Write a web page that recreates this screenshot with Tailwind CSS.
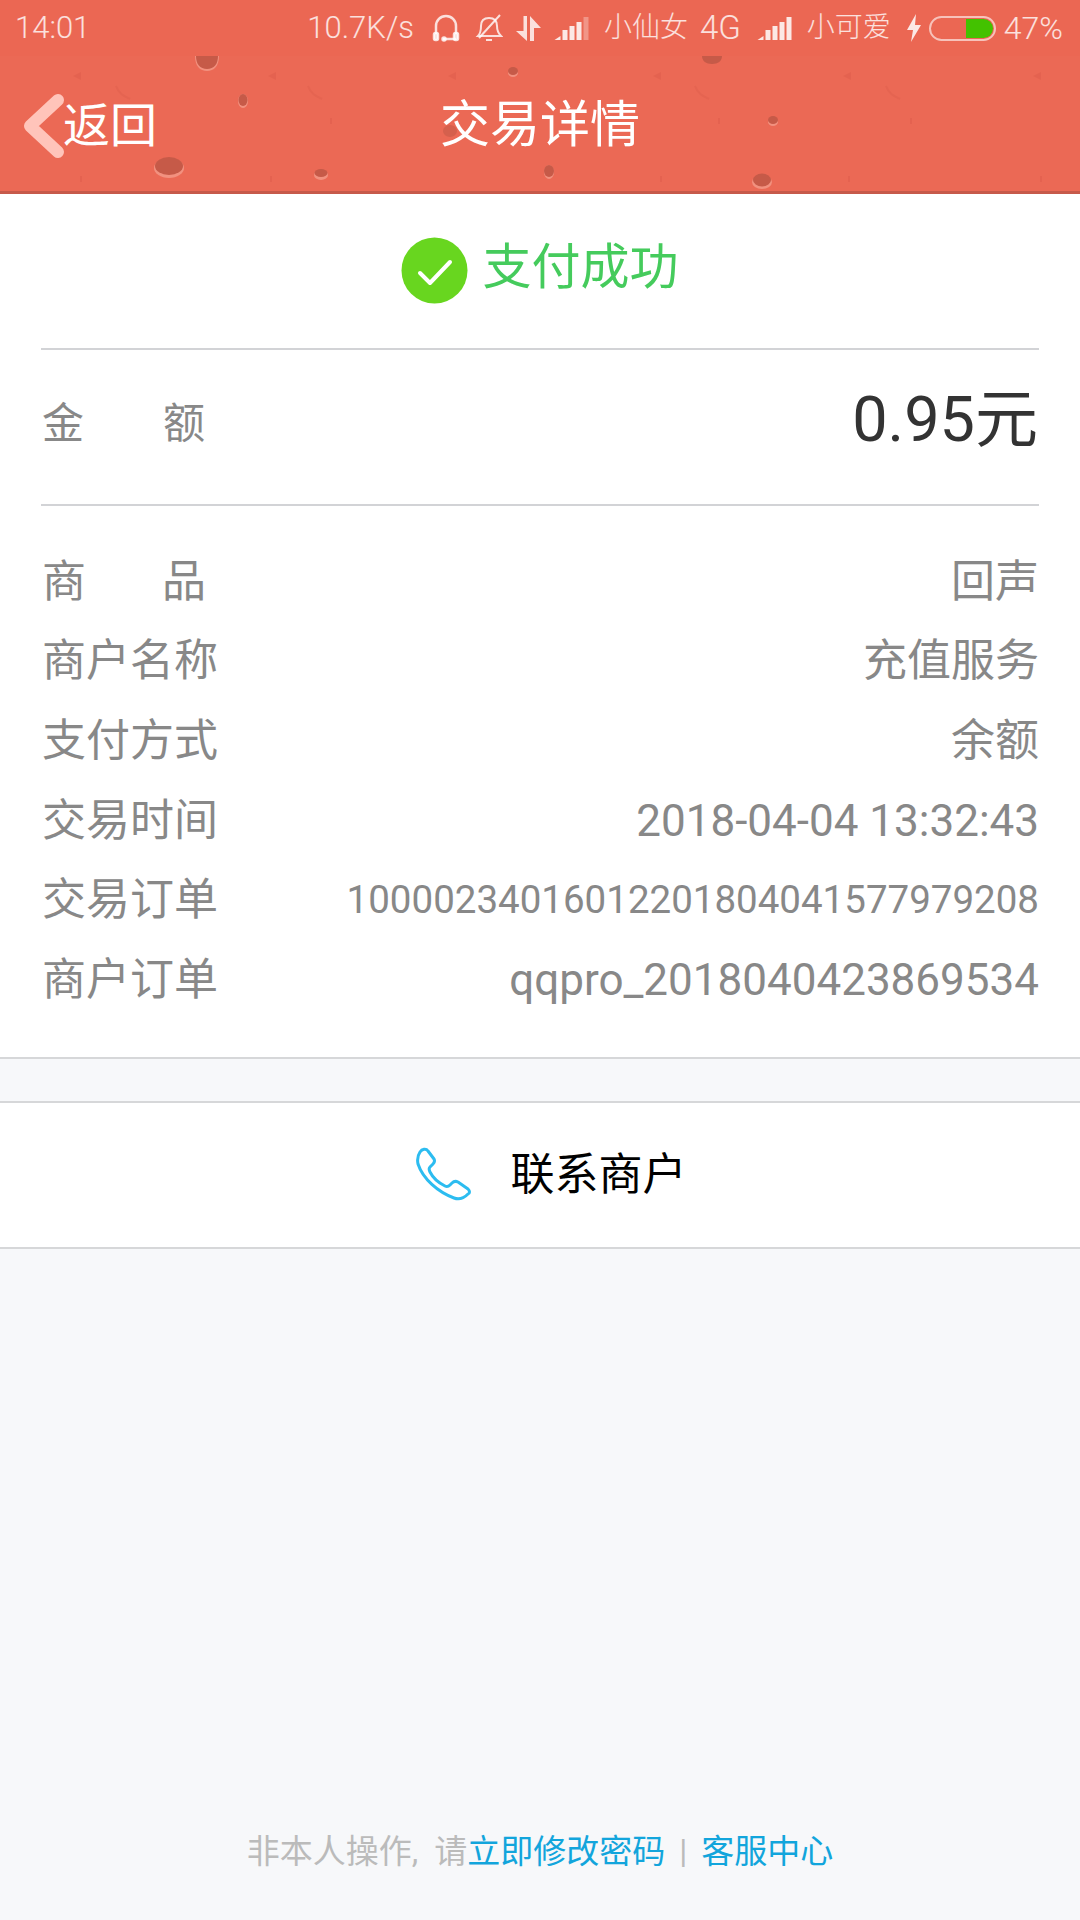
<!DOCTYPE html>
<html lang="zh-CN">
  <head>
    <meta charset="UTF-8" />
    <title>交易详情</title>
    <script src="https://cdn.jsdelivr.net/npm/@tailwindcss/browser@4"></script>
  </head>
  <body class="w-[1080px] h-[1920px] overflow-hidden bg-[#f7f8fa] font-['Roboto','Noto_Sans_CJK_SC',sans-serif] flex flex-col">
    <!-- header: status bar + nav -->
    <header class="relative h-[194px] bg-[#eb6753] shrink-0">
      <!-- nav texture -->
      <svg class="absolute left-0 top-[56px]" width="1080" height="138" viewBox="0 56 1080 138">
        <rect x="0" y="56" width="1080" height="135" fill="#eb6955" />
        <rect x="0" y="191" width="1080" height="3" fill="#c65a4b" />
        <g fill="#f2917f">
          <path d="M195 56h24c0 10-5 15-12 15s-12-5-12-15z" />
          <ellipse cx="243" cy="101" rx="5" ry="7" />
          <ellipse cx="513" cy="73" rx="5" ry="4" />
          <ellipse cx="169" cy="168" rx="15" ry="10" />
          <ellipse cx="321" cy="175" rx="7" ry="5" />
          <ellipse cx="773" cy="122" rx="5" ry="4" />
          <ellipse cx="549" cy="172" rx="5" ry="7" />
          <ellipse cx="762" cy="182" rx="10" ry="7" />
        </g>
        <g fill="#c65a48">
          <path d="M196 56h22c0 8-4 13-11 13s-11-5-11-13z" />
          <path d="M702 56h20c0 5-4 8-10 8s-10-3-10-8z" />
          <ellipse cx="243" cy="100" rx="4.500" ry="6" />
          <ellipse cx="513" cy="71" rx="5" ry="4" />
          <ellipse cx="169" cy="166" rx="14" ry="9" />
          <ellipse cx="321" cy="173" rx="6.500" ry="4" />
          <ellipse cx="773" cy="120" rx="5" ry="4" />
          <ellipse cx="549" cy="171" rx="5" ry="6" />
          <ellipse cx="762" cy="180" rx="9" ry="6.500" />
          <ellipse cx="450" cy="131" rx="7" ry="6" opacity="0.6" />
        </g>
        <g fill="#e05f4d" opacity="0.6">
          <path d="M73 76l8-4v8z" />
          <path d="M268 76l8-4v8z" />
          <path d="M448 76l8-4v8z" />
          <path d="M653 76l8-4v8z" />
          <path d="M843 76l8-4v8z" />
          <path d="M1033 76l8-4v8z" />
          <rect x="80" y="176" width="2" height="6" />
          <rect x="270" y="176" width="2" height="6" />
          <rect x="660" y="176" width="2" height="6" />
          <rect x="848" y="176" width="2" height="6" />
          <rect x="1040" y="176" width="2" height="6" />
          <rect x="330" y="118" width="2" height="6" />
          <rect x="718" y="118" width="2" height="6" />
          <rect x="910" y="118" width="2" height="6" />
        </g>
        <g fill="none" stroke="#e05f4d" stroke-width="2" opacity="0.5">
          <path d="M116 86c3 8 8 10 14 13" />
          <path d="M308 86c3 8 8 10 14 13" />
          <path d="M695 86c3 8 8 10 14 13" />
          <path d="M886 86c3 8 8 10 14 13" />
        </g>
      </svg>

      <!-- status bar -->
      <div class="relative h-[56px] flex items-center justify-between pl-[15px] pr-[17px] text-white/80 text-[31px] font-light">
        <span>14:01</span>
        <div class="flex items-center">
          <span>10.7K/s</span>
          <svg class="ml-[18px]" width="28" height="28" viewBox="0 0 28 28" fill="none" stroke="#fff" stroke-opacity="0.8" stroke-width="2.500">
            <path d="M4 20V12a10 10 0 0 1 20 0v8" />
            <rect x="2" y="19" width="4" height="7" rx="1.500" fill="#fff" fill-opacity="0.8" />
            <rect x="22" y="19" width="4" height="7" rx="1.500" fill="#fff" fill-opacity="0.8" />
            <path d="M24 25h-11" />
            <circle cx="12" cy="25" r="1.500" fill="#fff" />
          </svg>
          <svg class="ml-[15px]" width="28" height="30" viewBox="0 0 28 30" fill="none" stroke="#fff" stroke-opacity="0.8" stroke-width="2">
            <path d="M3 23c3-3 3-6 3-10 0-5 3-8 8-8s8 3 8 8c0 4 1 7 4 10z" />
            <path d="M11 27h6" />
            <path d="M4 25L25 2" />
          </svg>
          <svg class="ml-[13px]" width="25" height="25" viewBox="0 0 25 25" fill="#fff" fill-opacity="0.8">
            <path d="M7.500 0H11v25L0 15h7.500z" />
            <path d="M14 25V0l11 12h-7v13z" />
          </svg>
          <!-- signal 1 -->
          <svg class="ml-[13px]" width="35" height="24" viewBox="0 0 34 24" fill="#fff" fill-opacity="0.85">
            <path d="M0 24l6-4v4z" />
            <rect x="8" y="14" width="5" height="10" />
            <rect x="15" y="10" width="5" height="14" />
            <rect x="22" y="6" width="5" height="18" />
            <rect x="29" y="1" width="5" height="23" fill-opacity="0.3" />
          </svg>
          <span class="ml-[15px] text-[28px]">小仙女</span>
          <span class="ml-[12px] text-[33px]">4G</span>
          <svg class="ml-[16px]" width="35" height="24" viewBox="0 0 34 24" fill="#fff" fill-opacity="0.85">
            <path d="M0 24l6-4v4z" />
            <rect x="8" y="14" width="5" height="10" />
            <rect x="15" y="10" width="5" height="14" />
            <rect x="22" y="6" width="5" height="18" />
            <rect x="29" y="1" width="5" height="23" />
          </svg>
          <span class="ml-[15px] text-[28px]">小可爱</span>
          <svg class="ml-[15px]" width="16" height="28" viewBox="0 0 16 28" fill="#fff" fill-opacity="0.85">
            <path d="M10 0L1 16h6l-2 12 10-17H9z" />
          </svg>
          <div class="ml-[7px] relative w-[67px] h-[25px] rounded-full border-2 border-white/60 overflow-hidden">
            <div class="absolute right-[1px] top-[1px] bottom-[1px] w-[27px] bg-[#43c200] rounded-r-full"></div>
          </div>
          <span class="ml-[8px] text-[32px]">47%</span>
        </div>
      </div>

      <!-- nav -->
      <nav class="relative h-[138px] flex items-center justify-center">
        <div class="absolute left-[22px] top-[35px] flex items-center">
          <svg width="42" height="64" viewBox="0 0 42 64" fill="none">
            <path d="M36 6L8 32l28 26" stroke="#ffc4ba" stroke-width="12" stroke-linecap="round" stroke-linejoin="round" />
          </svg>
          <span class="text-white text-[47px] -ml-[1px]">返回</span>
        </div>
        <h1 class="text-white text-[50px] font-normal">交易详情</h1>
      </nav>
    </header>

    <!-- detail card -->
    <section class="bg-white border-b-2 border-[#d6d7d9] shrink-0">
      <div class="h-[156px] border-b-2 border-[#d2d3d6] mx-[41px] flex items-center justify-center gap-[14px] pb-[2px]">
        <svg width="67" height="67" viewBox="0 0 67 67">
          <circle cx="33.500" cy="33.500" r="33" fill="#68d61f" />
          <path d="M19 36l10 10 20-21" fill="none" stroke="#fff" stroke-width="4" stroke-linecap="round" stroke-linejoin="round" />
        </svg>
        <span class="text-[#45cb5c] text-[49px] leading-none pb-[6px]">支付成功</span>
      </div>
      <div class="h-[156px] border-b-2 border-[#d2d3d6] mx-[41px] flex items-center justify-between pl-[1px] pr-[1px] pb-[8px]">
        <span class="w-[163px] flex justify-between text-[#888888] text-[42px]"><span>金</span><span>额</span></span>
        <span class="text-[#333333] text-[63px] leading-none pb-[8px]">0.95元</span>
      </div>
      <dl class="pl-[42px] pr-[41px] pt-[36px] pb-[37px] text-[44px] text-[#888888]">
        <div class="h-[79.600px] flex items-center justify-between">
          <dt class="w-[164px] flex justify-between"><span>商</span><span>品</span></dt>
          <dd>回声</dd>
        </div>
        <div class="h-[79.600px] flex items-center justify-between">
          <dt>商户名称</dt>
          <dd>充值服务</dd>
        </div>
        <div class="h-[79.600px] flex items-center justify-between">
          <dt>支付方式</dt>
          <dd>余额</dd>
        </div>
        <div class="h-[79.600px] flex items-center justify-between">
          <dt>交易时间</dt>
          <dd>2018-04-04 13:32:43</dd>
        </div>
        <div class="h-[79.600px] flex items-center justify-between">
          <dt>交易订单</dt>
          <dd class="text-[38.500px]">10000234016012201804041577979208</dd>
        </div>
        <div class="h-[79.600px] flex items-center justify-between">
          <dt>商户订单</dt>
          <dd>qqpro_2018040423869534</dd>
        </div>
      </dl>
    </section>

    <!-- contact -->
    <button class="mt-[42px] h-[148px] bg-white border-y-2 border-[#d6d7d9] flex items-center justify-center shrink-0">
      <svg width="58" height="58" viewBox="0 0 58 58" fill="none" class="ml-[22px] mt-[2px]">
        <path d="M4 5c2-3 6-4 8-1l6 8c1 2 1 3-1 5l-3 3c-1 1-1 3 0 5 3 6 9 11 15 14 2 1 3 1 5-1l2-2c2-2 4-2 6-1l10 7c2 2 2 4 0 5-4 4-9 6-14 4C22 45 7 32 2 17 1 12 2 8 4 5z" stroke="#2cbcf0" stroke-width="3" stroke-linejoin="round" />
      </svg>
      <span class="ml-[37px] text-black text-[44px]">联系商户</span>
    </button>

    <!-- footer -->
    <footer class="mt-auto h-[93px] flex justify-center text-[33px] text-[#bbbbbb]">
      <p>非本人操作<span class="mr-[16px]">,</span>请<span class="text-[#12a5dc]">立即修改密码</span><span class="mx-[14px]">|</span><span class="text-[#12a5dc]">客服中心</span></p>
    </footer>
  </body>
</html>
